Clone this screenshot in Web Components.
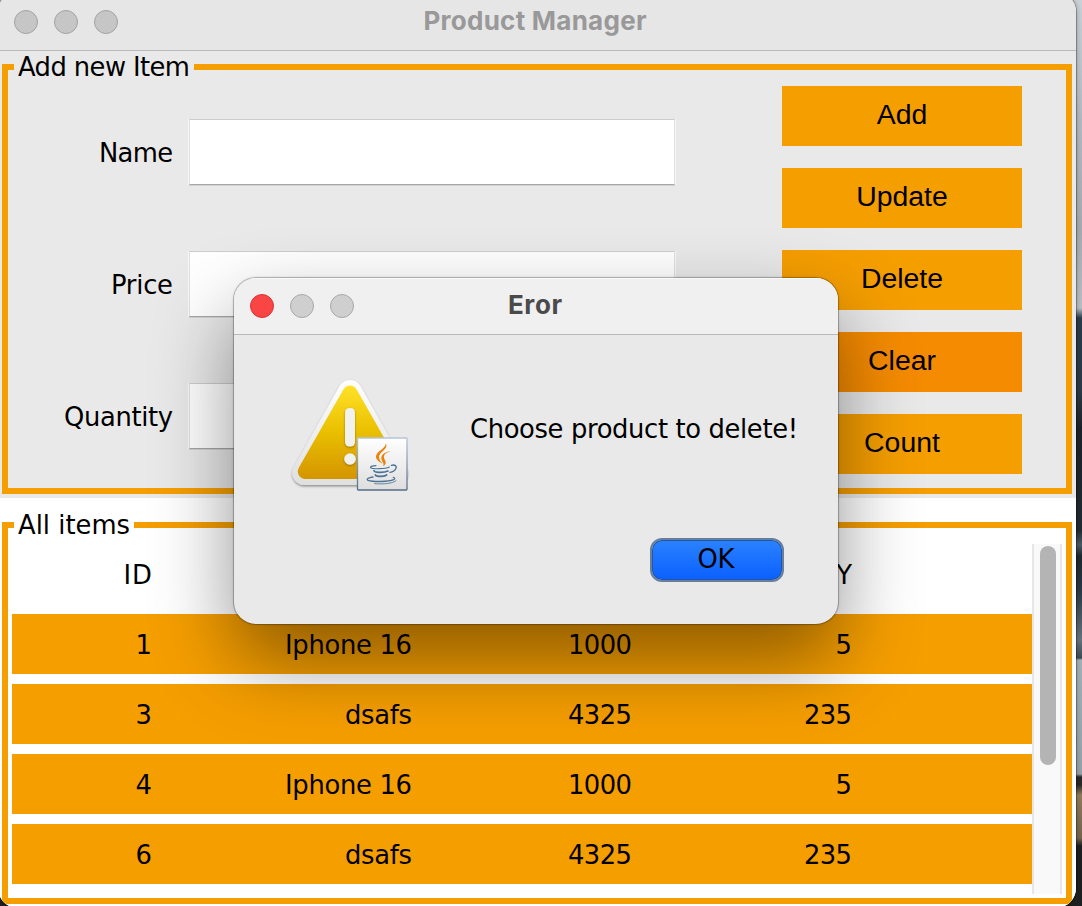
<!DOCTYPE html>
<html lang="en">
<head>
<meta charset="utf-8">
<title>Product Manager</title>
<style>
  html, body { margin: 0; height: 906px; overflow: hidden; }
  body {
    font: 25.800px/30px "DejaVu Sans", Verdana, sans-serif;
    color: #000;
    background: #1e2023;
  }
</style>
</head>
<body>
<product-app></product-app>

<script>
const define = (name, html, setup) => {
  const tpl = document.createElement('template');
  tpl.innerHTML = html.trim();
  customElements.define(name, class extends HTMLElement {
    constructor() {
      super();
      this.attachShadow({ mode: 'open' }).appendChild(tpl.content.cloneNode(true));
    }
    connectedCallback() { if (setup) setup.call(this, this.shadowRoot); }
  });
};

/* Single-line text tracked to an exact advance width (attribute "w"). */
define('fit-text', `
  <style>
    :host { display: inline-block; vertical-align: top; }
    span { display: inline-block; white-space: pre; vertical-align: top; }
  </style><span></span>`, function (root) {
  const t = root.querySelector('span');
  const text = this.getAttribute('text');
  t.textContent = text;
  const w = parseFloat(this.getAttribute('w'));
  if (w) {
    const gap = (w - t.getBoundingClientRect().width) / Math.max(1, text.length - 1);
    t.style.letterSpacing = gap + 'px';
    t.style.marginRight = -gap + 'px';
  }
});

define('window-dots', `
  <style>
    :host { display: flex; gap: 16px; --c: #c6c6c6; --b: #a3a3a3; --first: var(--c); --firstb: var(--b); }
    i { width: 24px; height: 24px; box-sizing: border-box; border-radius: 50%; background: var(--c); border: 1px solid var(--b); }
    i:first-of-type { background: var(--first); border-color: var(--firstb); }
  </style><i></i><i></i><i></i>`);

define('group-box', `
  <style>
    :host { display: block; }
    fieldset { box-sizing: border-box; height: 100%; margin: 0; padding: 0; border: 6px solid #f59e00; min-width: 0; }
    legend { margin: 0 0 0 6px; padding: 1px 4px; line-height: 30px; height: 30px; box-sizing: content-box; }
  </style>
  <fieldset><legend><slot name="legend"></slot></legend><slot></slot></fieldset>`);

define('form-row', `
  <style>
    :host { display: grid; grid-template-columns: 165px 486px; column-gap: 16px; align-items: center; height: 66px; }
    .label { text-align: right; padding-top: 2px; }
    .field { height: 66px; box-sizing: border-box; background: #fff; border: 1px solid #e0e0e0; border-top-color: #cdcdcd;
      border-bottom-color: #a6a6a6; box-shadow: -1px 0 #f8f8f8, 1px 0 #f8f8f8, 0 1px #d2d2d2; }
  </style>
  <div class="label"><slot></slot></div><div class="field"></div>`);

define('flat-button', `
  <style>
    :host { display: flex; align-items: center; justify-content: center; box-sizing: border-box; height: 60px; padding-bottom: 4px;
      background: #f59e00; font: 28.400px/32px "Liberation Sans", Arial, sans-serif; }
    :host([hot]) { background: #f58b00; }
  </style><slot></slot>`);

define('item-row', `
  <style>
    :host { display: grid; grid-template-columns: 140px 260px 220px 220px 1fr; height: 60px; box-sizing: border-box; padding-top: 2px;
      align-items: center; background: #f59e00; text-align: right; }
    :host([header]) { background: none; }
  </style><slot></slot>`);

define('scroll-bar', `
  <style>
    :host { display: block; box-sizing: border-box; width: 30px; height: 350px; padding: 2px 4px 0 6px; background: #f9f9f9;
      border: solid #e7e7e7; border-width: 0 2px; }
    div { width: 16px; height: 219px; border-radius: 8px; background: #b4b4b4; }
  </style><div></div>`);

define('alert-icon', `
  <style>:host { display: block; width: 140px; height: 130px; } svg { display: block; }</style>
  <svg width="140" height="130" viewBox="0 0 140 130">
    <defs>
      <linearGradient id="y" gradientUnits="userSpaceOnUse" x1="0" y1="15" x2="0" y2="109">
        <stop offset="0" stop-color="#ffe22a"/><stop offset=".5" stop-color="#eabf00"/><stop offset="1" stop-color="#d39500"/>
      </linearGradient>
      <linearGradient id="w" gradientUnits="userSpaceOnUse" x1="0" y1="10" x2="0" y2="115">
        <stop offset="0" stop-color="#fff"/><stop offset="1" stop-color="#dfdfdf"/>
      </linearGradient>
      <linearGradient id="j" x1="0" y1="0" x2="0" y2="1">
        <stop offset="0" stop-color="#fff"/><stop offset="1" stop-color="#dedede"/>
      </linearGradient>
      <linearGradient id="jb" x1="0" y1="0" x2="0" y2="1">
        <stop offset="0" stop-color="#b3c5da"/><stop offset="1" stop-color="#566d88"/>
      </linearGradient>
      <filter id="s" x="-20%" y="-20%" width="140%" height="140%"><feDropShadow dx="0" dy="1.3" stdDeviation="1.3" flood-opacity=".42"/></filter>
      <filter id="s2" x="-50%" y="-50%" width="200%" height="200%"><feDropShadow dx="0" dy="1" stdDeviation=".8" flood-color="#6b4c00" flood-opacity=".65"/></filter>
    </defs>
    <path d="M70 22 24.300 103h91.400z" fill="url(#w)" stroke="url(#w)" stroke-width="24" stroke-linejoin="round" filter="url(#s)"/>
    <path d="M70 23 25.300 101.500h89.400z" fill="url(#y)" stroke="url(#y)" stroke-width="15" stroke-linejoin="round"/>
    <g fill="#f1f1ee" filter="url(#s2)"><rect x="65" y="38" width="10" height="38.500" rx="4.500"/><circle cx="70" cy="89" r="5.800"/></g>
    <rect x="77.500" y="68" width="49.500" height="52" rx=".8" fill="url(#j)" stroke="url(#jb)" stroke-width="1.300"/>
    <g transform="scale(.33333)" fill="none" stroke-linecap="round">
      <g fill="#e8830c" stroke="none">
        <path d="M318 220C326 238 297 246 297 261C297 270 304 275 307 281C296 275 287 268 288 259C290 243 316 238 318 220Z"/>
        <path d="M332 244C316 249 311 255 312 263C313 269 319 273 317 280C316 284 313 287 309 289C315 280 303 273 304 263C305 252 319 245 332 244Z"/>
      </g>
      <g stroke="#4b7396">
        <path d="M288 287C276 288 270 290 272 293C280 298 315 297 328 291" stroke-width="3.500"/>
        <path d="M334 286C345 283 351 288 348 295C345 302 338 306 330 307" stroke-width="4"/>
        <path d="M282 302C283 308 311 309 324 303" stroke-width="5"/>
        <path d="M286 315C289 320 310 321 320 315" stroke-width="5"/>
        <path d="M279 321C264 323 258 328 264 331C280 336 326 336 341 329C346 327 345 324 340 322" stroke-width="4"/>
        <path d="M284 341C310 343 338 341 348 332" stroke-width="2.500"/>
      </g>
    </g>
  </svg>`);

define('alert-dialog', `
  <style>
    :host { display: block; box-sizing: border-box; width: 604px; height: 346px; border-radius: 22px; background: #e9e9e9; overflow: hidden;
      box-shadow: 0 0 0 1px rgba(0,0,0,.2), 0 0 3px rgba(0,0,0,.25), 0 36px 80px rgba(0,0,0,.43); }
    header { display: grid; grid-template-columns: 16px 104px 1fr 120px; height: 57px; box-sizing: border-box; background: #f0f0f0;
      border-bottom: 1px solid #b9b9b9; border-top: 1px solid #fafafa; align-items: start; }
    window-dots { grid-column: 2; margin-top: 15px; --c: #cfcfcf; --b: #a9a9a9; --first: #fa4545; --firstb: #d9333a; }
    .title { grid-column: 3; padding: 10px 2px 0 0; text-align: center; font: 700 26px/32px Inter, sans-serif; color: #4a4a4a; }
    .body { display: flex; padding: 35px 0 0 46px; }
    .msg { padding: 44px 0 0 50px; }
    .actions { display: flex; justify-content: flex-end; padding: 38px 54px 0 0; }
    button { display: flex; justify-content: center; align-items: flex-start; width: 134px; height: 44px; padding: 4px 2px 0 0; box-sizing: border-box; font: inherit; color: #000;
      border: 2px solid #687f9c; border-radius: 12px; background: linear-gradient(#2b82ff, #0a60ff) padding-box; box-shadow: inset 0 0 0 1px #2257a5; }
  </style>
  <header><window-dots></window-dots><div class="title"><fit-text text="Eror" w="54"></fit-text></div></header>
  <div class="body"><alert-icon></alert-icon><div class="msg"><fit-text text="Choose product to delete!" w="328"></fit-text></div></div>
  <div class="actions"><button><fit-text text="OK" w="37"></fit-text></button></div>`);

define('product-app', `
  <style>
    :host { display: block; position: relative; width: 1082px; height: 906px; overflow: hidden;
      background: linear-gradient(#c9d1d8 0, #b3babf 120px, #a6abb0 230px, #b9bec2 308px, #2a3b49 318px, #2b3a45 390px, #1b2327 430px, #202b34 530px,
        #4a5964 545px, #1d2830 556px, #2a3844 590px, #66737d 640px, #3b4b56 658px, #a3b0b8 660px, #94a1a9 774px, #26282b 777px, #2b2926 785px, #8f7a5c 795px, #75644e 838px, #1e1f21 846px); }
    .win { display: flex; flex-direction: column; box-sizing: border-box; width: 1078px; height: 916px; margin: -8px 0 0 -2px; padding: 8px 0 0 2px;
      border-radius: 20px; overflow: hidden; background: linear-gradient(#e6e6e6 58px, #fff 58px); box-shadow: 0 0 0 1px rgba(0,0,0,.25), 0 0 5px rgba(0,0,0,.35); }
    header { display: grid; grid-template-columns: 120px 1fr 126px; box-sizing: border-box; height: 51px; background: #e6e6e6; border-bottom: 1px solid #b9b9b9; flex: none; }
    header window-dots { padding: 10px 0 0 14px; }
    .title { padding-top: 4.500px; text-align: center; font: 700 26px/32px Inter, sans-serif; color: #999; }
    .add { box-sizing: border-box; height: 447px; background: #e9e9e9; padding: 0 4px 4px 2px; flex: none; }
    .all { box-sizing: border-box; height: 408px; background: #fff; padding: 11px 4px 2px 2px; flex: none; }
    group-box { height: 100%; }
    .form { display: grid; grid-template-columns: 667px 240px; column-gap: 107px; align-items: start; padding-top: 3px; }
    .fields { display: grid; row-gap: 66px; padding-top: 33px; }
    .buttons { display: grid; row-gap: 22px; }
    .list { display: flex; padding: 3px 4px 0; }
    .rows { flex: 1; display: grid; row-gap: 10px; align-content: start; }
    alert-dialog { position: absolute; left: 234px; top: 278px; }
  </style>
  <div class="win">
    <header><window-dots></window-dots><div class="title"><fit-text text="Product Manager" w="223"></fit-text></div></header>
    <section class="add">
      <group-box>
        <fit-text slot="legend" text="Add new Item" w="172"></fit-text>
        <div class="form">
          <div class="fields">
            <form-row><fit-text text="Name" w="74"></fit-text></form-row>
            <form-row><fit-text text="Price" w="62"></fit-text></form-row>
            <form-row><fit-text text="Quantity" w="109"></fit-text></form-row>
          </div>
          <div class="buttons">
            <flat-button>Add</flat-button>
            <flat-button>Update</flat-button>
            <flat-button>Delete</flat-button>
            <flat-button hot>Clear</flat-button>
            <flat-button>Count</flat-button>
          </div>
        </div>
      </group-box>
    </section>
    <section class="all">
      <group-box>
        <fit-text slot="legend" text="All items" w="112"></fit-text>
        <div class="list">
          <div class="rows"></div>
          <scroll-bar></scroll-bar>
        </div>
      </group-box>
    </section>
  </div>
  <alert-dialog></alert-dialog>`, function (root) {
  const iphone = ['Iphone 16', 127], dsafs = ['dsafs', 67];
  const rows = [
    [['ID', 28.5], null, null, ['Y', 16]],
    [['1', 0], iphone, ['1000', 64], ['5', 0]],
    [['3', 0], dsafs, ['4325', 64], ['235', 48]],
    [['4', 0], iphone, ['1000', 64], ['5', 0]],
    [['6', 0], dsafs, ['4325', 64], ['235', 48]]
  ];
  root.querySelector('.rows').innerHTML = rows.map((cells, i) =>
    `<item-row${i ? '' : ' header'}>` + cells.map(c =>
      c ? `<div><fit-text text="${c[0]}" w="${c[1]}"></fit-text></div>` : '<div></div>').join('') +
    '</item-row>').join('');
});
</script>
</body>
</html>
